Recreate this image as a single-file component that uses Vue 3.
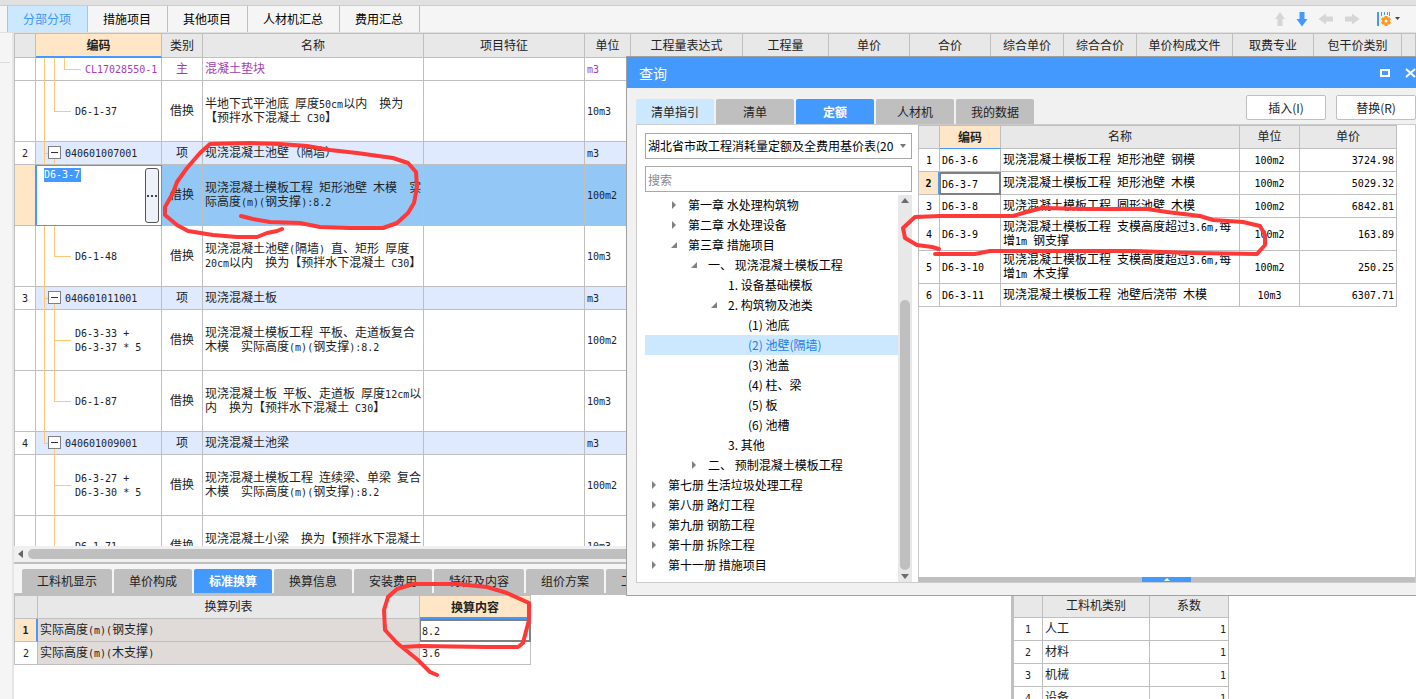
<script setup>
import { h } from 'vue'

// Splits mixed text so that half-width runs take the monospaced face.
const MixedText = (props) =>
  h(
    'span',
    { class: 'mixed' },
    (props.text.match(/[\x20-\x7e]+|[^\x20-\x7e]+/g) || []).map((run) =>
      h('span', { class: /[\x20-\x7e]/.test(run) ? 'half' : 'full' }, run)
    )
  )
MixedText.props = ['text']

const mainTabs = ['分部分项', '措施项目', '其他项目', '人材机汇总', '费用汇总']

const columns = [
  '名称', '项目特征', '单位', '工程量表达式', '工程量', '单价', '合价',
  '综合单价', '综合合价', '单价构成文件', '取费专业', '包干价类别', ''
]

const rows = [
  { kind: 'leaf', code: 'CL17028550-1', type: '主', name: '混凝土垫块', unit: 'm3', short: true, purple: true, lines: ['a', 'b', 'c half', 'ec'] },
  { kind: 'leaf', code: 'D6-1-37', type: '借换', name: '半地下式平池底 厚度50cm以内  换为\n【预拌水下混凝土 C30】', unit: '10m3', lines: ['a', 'b half', 'eb'] },
  { kind: 'group', no: '2', code: '040601007001', type: '项', name: '现浇混凝土池壁（隔墙）', unit: 'm3', short: true, lines: ['a', 'ea', 'b low'] },
  { kind: 'edit', code: 'D6-3-7', type: '借换', name: '现浇混凝土模板工程 矩形池壁 木模  实\n际高度(m)(钢支撑):8.2', unit: '100m2', lines: [] },
  { kind: 'leaf', code: 'D6-1-48', type: '借换', name: '现浇混凝土池壁(隔墙) 直、矩形 厚度\n20cm以内  换为【预拌水下混凝土 C30】', unit: '10m3', lines: ['a', 'b half', 'eb'] },
  { kind: 'group', no: '3', code: '040601011001', type: '项', name: '现浇混凝土板', unit: 'm3', short: true, lines: ['a', 'ea', 'b low'] },
  { kind: 'leaf', code: 'D6-3-33 +\nD6-3-37 * 5', type: '借换', name: '现浇混凝土模板工程 平板、走道板复合\n木模  实际高度(m)(钢支撑):8.2', unit: '100m2', lines: ['a', 'b', 'eb'] },
  { kind: 'leaf', code: 'D6-1-87', type: '借换', name: '现浇混凝土板 平板、走道板 厚度12cm以\n内  换为【预拌水下混凝土 C30】', unit: '10m3', lines: ['a', 'b half', 'eb'] },
  { kind: 'group', no: '4', code: '040601009001', type: '项', name: '现浇混凝土池梁', unit: 'm3', short: true, lines: ['a half', 'ea', 'b low'] },
  { kind: 'leaf', code: 'D6-3-27 +\nD6-3-30 * 5', type: '借换', name: '现浇混凝土模板工程 连续梁、单梁 复合\n木模  实际高度(m)(钢支撑):8.2', unit: '100m2', lines: ['b', 'eb'] },
  { kind: 'leaf', code: 'D6-1-71', type: '借换', name: '现浇混凝土小梁  换为【预拌水下混凝土\nC30】', unit: '10m3', lines: ['b half', 'eb'] }
]

const detailTabs = ['工料机显示', '单价构成', '标准换算', '换算信息', '安装费用', '特征及内容', '组价方案', '工程量明细']
const factors = ['人工', '材料', '机械', '设备']

const queryTabs = ['清单指引', '清单', '定额', '人材机', '我的数据']
const tree = [
  { d: 1, s: 'closed', t: '第一章 水处理构筑物' },
  { d: 1, s: 'closed', t: '第二章 水处理设备' },
  { d: 1, s: 'open', t: '第三章 措施项目' },
  { d: 2, s: 'open', t: '一、 现浇混凝土模板工程' },
  { d: 3, t: '1. 设备基础模板' },
  { d: 3, s: 'open', t: '2. 构筑物及池类' },
  { d: 4, t: '(1) 池底' },
  { d: 4, t: '(2) 池壁(隔墙)', on: true },
  { d: 4, t: '(3) 池盖' },
  { d: 4, t: '(4) 柱、梁' },
  { d: 4, t: '(5) 板' },
  { d: 4, t: '(6) 池槽' },
  { d: 3, t: '3. 其他' },
  { d: 2, s: 'closed', t: '二、 预制混凝土模板工程' },
  { d: 0, s: 'closed', t: '第七册 生活垃圾处理工程' },
  { d: 0, s: 'closed', t: '第八册 路灯工程' },
  { d: 0, s: 'closed', t: '第九册 钢筋工程' },
  { d: 0, s: 'closed', t: '第十册 拆除工程' },
  { d: 0, s: 'closed', t: '第十一册 措施项目' }
]
const quotas = [
  { code: 'D6-3-6', name: '现浇混凝土模板工程 矩形池壁 钢模', unit: '100m2', price: '3724.98' },
  { code: 'D6-3-7', name: '现浇混凝土模板工程 矩形池壁 木模', unit: '100m2', price: '5029.32', on: true },
  { code: 'D6-3-8', name: '现浇混凝土模板工程 圆形池壁 木模', unit: '100m2', price: '6842.81' },
  { code: 'D6-3-9', name: '现浇混凝土模板工程 支模高度超过3.6m,每\n增1m 钢支撑', unit: '100m2', price: '163.89', tall: true },
  { code: 'D6-3-10', name: '现浇混凝土模板工程 支模高度超过3.6m,每\n增1m 木支撑', unit: '100m2', price: '250.25', tall: true },
  { code: 'D6-3-11', name: '现浇混凝土模板工程 池壁后浇带 木模', unit: '10m3', price: '6307.71' }
]
</script>

<template>
  <div class="app">
    <div class="topline"></div>
    <header class="bar">
      <nav class="main-tabs">
        <button v-for="(t, i) in mainTabs" :key="t" :class="{ on: i === 0 }">{{ t }}</button>
      </nav>
      <div class="tools">
        <button aria-label="上移"><svg width="12" height="16"><path d="M6 1 11 8H8.500V15H3.500V8H1Z" fill="#d6d6d6" /></svg></button>
        <button aria-label="下移"><svg width="12" height="16"><path d="M6 15.500 11.500 8H8.500V1H3.500V8H.5Z" fill="#4499ff" /></svg></button>
        <button aria-label="左移"><svg width="16" height="12"><path d="M.5 6 8 .5V3.500H15V8.500H8V11.500Z" fill="#d6d6d6" /></svg></button>
        <button aria-label="右移"><svg width="16" height="12"><path d="M15.500 6 8 .5V3.500H1V8.500H8V11.500Z" fill="#d6d6d6" /></svg></button>
        <button class="cols" aria-label="列设置">
          <svg width="24" height="16">
            <path d="M0 1h2v14H0Z M4 1h1v4H4Z M7 1h1v3H7Z M10 1h1v3h-1Z M12 1h1v4h-1Z" fill="#4499ff" />
            <g fill="#ff9a1f">
              <path d="M7.500 5h3v10h-3Z" />
              <path d="M7.500 5h3v10h-3Z" transform="rotate(60 9 10)" />
              <path d="M7.500 5h3v10h-3Z" transform="rotate(120 9 10)" />
              <circle cx="9" cy="10" r="4" />
            </g>
            <circle cx="9" cy="10" r="1.500" fill="#fff" />
            <path d="M18 6h5l-2.500 3Z" fill="#444" />
          </svg>
        </button>
      </div>
    </header>

    <div class="work">
      <aside class="rail"><i></i></aside>
      <main class="panes">
        <section class="upper">
          <table class="grid bill">
            <colgroup>
              <col class="w21" /><col class="w126" /><col class="w41" /><col class="w221" /><col class="w161" /><col class="w46" />
              <col class="w112" /><col class="w86" /><col class="w81" /><col class="w81" /><col class="w73" /><col class="w73" />
              <col class="w96" /><col class="w81" /><col class="w88" /><col />
            </colgroup>
            <thead>
              <tr>
                <th></th>
                <th class="key">编码</th>
                <th>类别</th>
                <th v-for="c in columns" :key="c">{{ c }}</th>
              </tr>
            </thead>
            <tbody>
              <tr v-for="r in rows" :key="r.code" :class="[r.kind, { short: r.short, purple: r.purple }]">
                <td class="no"><MixedText :text="r.no || ''" /></td>
                <td v-if="r.kind === 'edit'" class="editing">
                  <div class="editor">
                    <input class="code-input" :value="r.code" aria-label="编码" />
                    <button class="more" aria-label="选择"><svg width="10" height="2"><path d="M0 0h2v2H0Z M4 0h2v2H4Z M8 0h2v2H8Z" fill="#444" /></svg></button>
                  </div>
                </td>
                <td v-else class="code">
                  <i v-for="l in r.lines" :key="l" :class="['ln', l]"></i>
                  <button v-if="r.kind === 'group'" class="box" aria-label="折叠"></button>
                  <MixedText :text="r.code" />
                </td>
                <td class="mid">{{ r.type }}</td>
                <td><MixedText :text="r.name" /></td>
                <td></td>
                <td><MixedText :text="r.unit" /></td>
                <td v-for="n in 10" :key="n"></td>
              </tr>
            </tbody>
          </table>
        </section>
        <div class="hscroll">
          <svg width="6" height="8"><path d="M5 0v8L0 4Z" fill="#666" /></svg>
          <div class="thumb"></div>
        </div>

        <section class="lower">
          <div class="convert">
            <nav class="tabs">
              <button v-for="(t, i) in detailTabs" :key="t" :class="{ on: i === 2 }">{{ t }}</button>
            </nav>
            <table class="grid conv">
              <colgroup><col class="w23" /><col class="w382" /><col class="w111" /></colgroup>
              <thead>
                <tr><th></th><th>换算列表</th><th class="key">换算内容</th></tr>
              </thead>
              <tbody>
                <tr>
                  <td class="no picked"><MixedText text="1" /></td>
                  <td class="dim"><MixedText text="实际高度(m)(钢支撑)" /></td>
                  <td class="focus"><MixedText text="8.2" /></td>
                </tr>
                <tr>
                  <td class="no"><MixedText text="2" /></td>
                  <td class="dim"><MixedText text="实际高度(m)(木支撑)" /></td>
                  <td><MixedText text="3.6" /></td>
                </tr>
              </tbody>
            </table>
          </div>
          <div class="factor">
            <table class="grid">
              <colgroup><col class="w29" /><col class="w107" /><col class="w79" /></colgroup>
              <thead>
                <tr><th></th><th>工料机类别</th><th>系数</th></tr>
              </thead>
              <tbody>
                <tr v-for="(f, i) in factors" :key="f">
                  <td class="no"><MixedText :text="String(i + 1)" /></td>
                  <td>{{ f }}</td>
                  <td class="num"><MixedText text="1" /></td>
                </tr>
              </tbody>
            </table>
          </div>
        </section>
      </main>
    </div>

    <section class="dialog" role="dialog" aria-label="查询">
      <div class="title">
        <h2>查询</h2>
        <button aria-label="最大化"><svg width="12" height="10"><path d="M2 2h8v6H2Z" fill="none" stroke="#fff" stroke-width="2" /></svg></button>
        <button aria-label="关闭"><svg width="12" height="10"><path d="M1 1l9 8M10 1l-9 8" stroke="#fff" stroke-width="2" /></svg></button>
      </div>
      <div class="body">
        <div class="head">
          <nav class="tabs">
            <button v-for="(t, i) in queryTabs" :key="t" :class="{ on: i === 2, pale: i === 0 }">{{ t }}</button>
          </nav>
          <div class="actions">
            <button>插入(I)</button>
            <button>替换(R)</button>
          </div>
        </div>
        <div class="split">
          <div class="side">
            <div class="combo">
              <select aria-label="定额库"><option>湖北省市政工程消耗量定额及全费用基价表(20</option></select>
              <svg width="6" height="4"><path d="M0 0h6L3 4Z" fill="#777" /></svg>
            </div>
            <input class="search" placeholder="搜索" aria-label="搜索" />
            <div class="treebox">
              <ul class="tree">
                <li v-for="n in tree" :key="n.t" :class="['d' + n.d, { on: n.on }]">
                  <svg width="8" height="8">
                    <path v-if="n.s === 'closed'" d="M2 0 6 4 2 8Z" fill="#808080" />
                    <path v-else-if="n.s === 'open'" d="M7 1V7H1Z" fill="#808080" />
                  </svg>
                  <span>{{ n.t }}</span>
                </li>
              </ul>
              <div class="vscroll">
                <svg width="10" height="5"><path d="M1 5 5 0 9 5Z" fill="#6b6b76" /></svg>
                <div class="vthumb"></div>
                <svg width="10" height="5"><path d="M1 0 5 5 9 0Z" fill="#6b6b76" /></svg>
              </div>
            </div>
          </div>
          <div class="result">
            <table class="grid quota">
              <colgroup><col class="w21" /><col class="w61" /><col class="w239" /><col class="w60" /><col class="w97" /></colgroup>
              <thead>
                <tr><th></th><th class="key">编码</th><th>名称</th><th>单位</th><th>单价</th></tr>
              </thead>
              <tbody>
                <tr v-for="(q, i) in quotas" :key="q.code" :class="{ tall: q.tall }">
                  <td class="no" :class="{ picked: q.on }"><MixedText :text="String(i + 1)" /></td>
                  <td :class="{ focus: q.on }"><MixedText :text="q.code" /></td>
                  <td><MixedText :text="q.name" /></td>
                  <td class="mid"><MixedText :text="q.unit" /></td>
                  <td class="num"><MixedText :text="q.price" /></td>
                </tr>
              </tbody>
            </table>
            <div class="grip"><button aria-label="展开"><svg width="6" height="3"><path d="M0 3 3 0 6 3Z" fill="#fff" /></svg></button></div>
          </div>
        </div>
      </div>
    </section>

    <svg class="marks" width="1416" height="699" aria-hidden="true">
      <g fill="none" stroke="#ff3838" stroke-width="4" stroke-linejoin="round" stroke-linecap="round">
        <path d="M241 216 253 219 270 222 300 223 320 227 350 228 383 228 397 223 408 213 414 203 417 187 416 172 408 163 393 158 357 153 330 150 307 146 280 144 250 143 210 144 200 153 187 168 177 182 173 193 165 207 165 215 177 225 188 231 213 235 237 237 257 237 267 233 277 231 282 229" />
        <path d="M939 249 932 247 917 245 905 238 903 228 915 217 940 216 1013 216 1023 213 1042 208 1087 209 1147 209 1167 212 1200 216 1213 220 1243 222 1260 226 1265 235 1265 245 1257 254 1193 253 1133 251 990 251 975 254 935 254" />
        <path d="M437 675 430 672 418 660 397 643 385 630 384 610 388 597 397 589 413 584 440 584 457 584 487 587 507 593 529 603 529 620 523 643 518 647 487 647 420 646 403 647" />
      </g>
    </svg>
  </div>
</template>

<style>
html, body { margin: 0; }
.mixed { white-space: pre; }
.mixed .half { font-family: "DejaVu Sans Mono", "Liberation Mono", monospace; font-size: 10px; line-height: 10px; }
</style>

<style scoped>
.app {
  position: relative;
  display: flex;
  flex-direction: column;
  height: 100vh;
  overflow: hidden;
  background: #f5f5f5;
  color: #222;
  font: 12px/14px "Noto Sans CJK SC", "Noto Sans", sans-serif;
}
.app * { box-sizing: border-box; }
button, input, select { font: inherit; color: inherit; margin: 0; padding: 0; border: 0; background: none; border-radius: 0; outline: 0; }
svg { display: block; }

.topline { flex: 0 0 6px; background: #e1e1e1; border-bottom: 1px solid #ccc; }
.bar { flex: 0 0 27px; display: flex; justify-content: space-between; border-bottom: 1px solid #e0e0e0; padding: 0 15px 0 7px; }
.main-tabs { display: flex; border-left: 1px solid #bfbfbf; }
.main-tabs button { padding: 0 16px 0 15px; border-right: 1px solid #bfbfbf; color: #000; }
.main-tabs .on { background: #cce8ff; color: #3f97fb; }
.tools { display: flex; align-items: center; gap: 10px; }
.tools button { min-width: 12px; }
.tools .cols { margin-left: 7px; }

.work { flex: 1; min-height: 0; display: flex; }
.rail { flex: 0 0 14px; border-right: 2px solid #e6e6e6; padding-top: 29px; }
.rail i { display: block; width: 10px; border-top: 1px solid #ddd; }
.panes { flex: 1; min-width: 0; display: flex; flex-direction: column; }
.upper { flex: 1; min-height: 0; overflow: hidden; background: #fff; }
.hscroll { flex: 0 0 18px; display: flex; align-items: center; gap: 4px; padding: 2px 0 2px 4px; background: #f0f0f0; border-bottom: 2px solid #bfbfbf; }
.thumb { flex: 1; height: 10px; border-radius: 5px 0 0 5px; background: #bfbfbf; }

.grid { table-layout: fixed; border-collapse: separate; border-spacing: 0; border: solid #bfbfbf; border-width: 1px 0 0 1px; width: 1px; background: #fff; }
.grid th, .grid td { height: 23px; padding: 0 2px 2px; border: solid #bfbfbf; border-width: 0 1px 1px 0; text-align: left; vertical-align: middle; overflow: hidden; }
.grid th { background: #e8e8e8; font-weight: 400; text-align: center; padding: 0 0 2px; }
.grid th.key { background: #ffe6c7; font-weight: 700; border-bottom: 2px solid #4499ff; padding-bottom: 0; }
.grid .no, .grid .mid { text-align: center; padding: 0 0 2px; }
.grid .num { text-align: right; }
.grid .picked { background: #ffe6c7; font-weight: 700; border-right: 2px solid #4499ff; }
.grid .focus { border: 2px solid #808080; border-left-width: 1px; padding: 0 1px 2px; }
.grid .dim { background: #e0dbd9; }

.bill { width: 100%; }
.bill th { height: 24px; }
.bill tbody td { height: 61px; position: relative; }
.bill tbody .short td { height: 23px; }
.bill .group td:not(.no) { background: #dfeaff; }
.bill .edit td { background: #93c8f6; }
.bill .edit .no { background: #ffe6c7; border-right-color: #4499ff; }
.bill .purple { color: #a33db5; }
.bill td.code { padding-left: 39px; overflow: visible; }
.bill .group td.code { padding-left: 29px; }
.bill .purple td.code { padding-left: 49px; }
.bill .edit td.editing { padding: 0; background: #fff; border: 1px solid #4499ff; }
.editor { display: flex; justify-content: space-between; align-items: flex-start; height: 59px; padding: 2px 2px 2px 7px; }
.code-input { width: 37px; height: 14px; background: #4499ff; color: #fff; font: 10px/14px "DejaVu Sans Mono", "Liberation Mono", monospace; }
.more { width: 14px; height: 55px; display: flex; align-items: center; justify-content: center; background: #eef1fa; border: 1px solid #555; border-radius: 3px; }
.box { position: absolute; left: 12px; top: 4px; width: 13px; height: 13px; border: 1px solid #808080; background: linear-gradient(#333, #333) center / 7px 1px no-repeat #fff; }
.ln { position: absolute; top: 0; bottom: -1px; border-left: 1px solid #ffc878; }
.ln.a { left: 8px; }
.ln.b { left: 18px; }
.ln.c { left: 28px; }
.ln.half { bottom: 50%; }
.ln.low { top: 17px; }
.ln.ea, .ln.eb, .ln.ec { top: 50%; bottom: auto; height: 0; width: 17px; border-left: 0; border-top: 1px solid #ffc878; }
.ln.ea { left: 8px; width: 4px; }
.ln.eb { left: 18px; }
.ln.ec { left: 28px; }

.w21 { width: 21px; } .w23 { width: 23px; } .w29 { width: 29px; } .w41 { width: 41px; } .w46 { width: 46px; }
.w60 { width: 60px; } .w61 { width: 61px; } .w73 { width: 73px; } .w79 { width: 79px; } .w81 { width: 81px; }
.w86 { width: 86px; } .w88 { width: 88px; } .w96 { width: 96px; } .w97 { width: 97px; } .w107 { width: 107px; }
.w111 { width: 111px; } .w112 { width: 112px; } .w126 { width: 126px; } .w161 { width: 161px; }
.w221 { width: 221px; } .w239 { width: 239px; } .w382 { width: 382px; }

.lower { flex: 0 0 135px; display: flex; overflow: hidden; }
.convert { flex: 1; min-width: 0; overflow: hidden; background: #fff; }
.factor { flex: 0 0 405px; padding-top: 30px; border-left: 2px solid #bfbfbf; background: #fff; }
.tabs { display: flex; gap: 2px; }
.tabs button { flex: none; height: 24px; padding: 0 15px; border-radius: 2px 2px 0 0; background: #bfbfbf; color: #222; }
.tabs button.on { background: #4499ff; color: #fff; font-weight: 700; }
.tabs button.pale { background: #cce8ff; }
.convert .tabs { padding: 5px 0 0 8px; background: #f5f5f5; border-bottom: 2px solid #bfbfbf; }

.dialog { position: absolute; left: 626px; right: 0; top: 56px; border: solid #a0a0a0; border-width: 1px 0 1px 1px; background: #f1f1f1; overflow: hidden; }
.title { display: flex; align-items: center; gap: 14px; height: 31px; padding-left: 12px; background: #4499ff; color: #fff; }
.title h2 { flex: 1; margin: 0; font-size: 14px; line-height: 20px; font-weight: 400; }
.title button:last-child { margin-right: -1px; }
.body { padding: 7px 0 12px 9px; }
.head { display: flex; justify-content: space-between; align-items: flex-end; height: 29px; }
.head .tabs button { width: 78px; height: 25px; padding: 0; }
.actions { display: flex; gap: 10px; align-self: flex-start; }
.actions button { width: 80px; height: 25px; background: #fff; border: 1px solid #bfbfbf; border-radius: 2px; }
.split { display: flex; border: solid #ccc; border-width: 1px 1px 1px 0; }
.side { flex: 0 0 282px; padding: 8px 6px 0 8px; border: solid #ccc; border-width: 0 0 0 1px; background: #fff; }
.combo { position: relative; width: 267px; }
.combo select, .search { display: block; width: 267px; height: 26px; padding: 0 16px 0 2px; border: 1px solid #a8a8a8; background: #fff; color: #000; appearance: none; }
.combo svg { position: absolute; right: 6px; top: 11px; }
.search { margin-top: 7px; }
.search::placeholder { color: #888; opacity: 1; }
.treebox { display: flex; margin-top: 3px; width: 267px; height: 387px; }
.tree { flex: 1; margin: 0; padding: 0; list-style: none; color: #000; }
.tree li { display: flex; align-items: center; gap: 10px; height: 20px; white-space: pre; }
.tree .d0 { padding-left: 5px; }
.tree .d1 { padding-left: 25px; }
.tree .d2 { padding-left: 45px; }
.tree .d3 { padding-left: 65px; }
.tree .d4 { padding-left: 85px; }
.tree .on { background: #cce8ff; color: #1a7fe8; }
.vscroll { flex: 0 0 14px; display: flex; flex-direction: column; align-items: center; justify-content: space-between; padding: 3px 0; background: #e8e8e8; }
.vthumb { width: 10px; height: 270px; margin: auto 0 4px; border-radius: 5px; background: #bfbfbf; }
.result { flex: 1; display: flex; flex-direction: column; justify-content: space-between; background: linear-gradient(#ccc, #ccc) left / 1px 100% no-repeat #fff; }
.quota th.key { border-bottom-width: 1px; }
.quota td { color: #000; }
.quota .tall td { height: 33px; }
.grip { height: 5px; background: #bfbfbf; display: flex; justify-content: center; }
.grip button { width: 49px; height: 5px; display: flex; justify-content: center; align-items: center; background: #4499ff; }

.marks { position: absolute; left: 0; top: 0; pointer-events: none; }
</style>
